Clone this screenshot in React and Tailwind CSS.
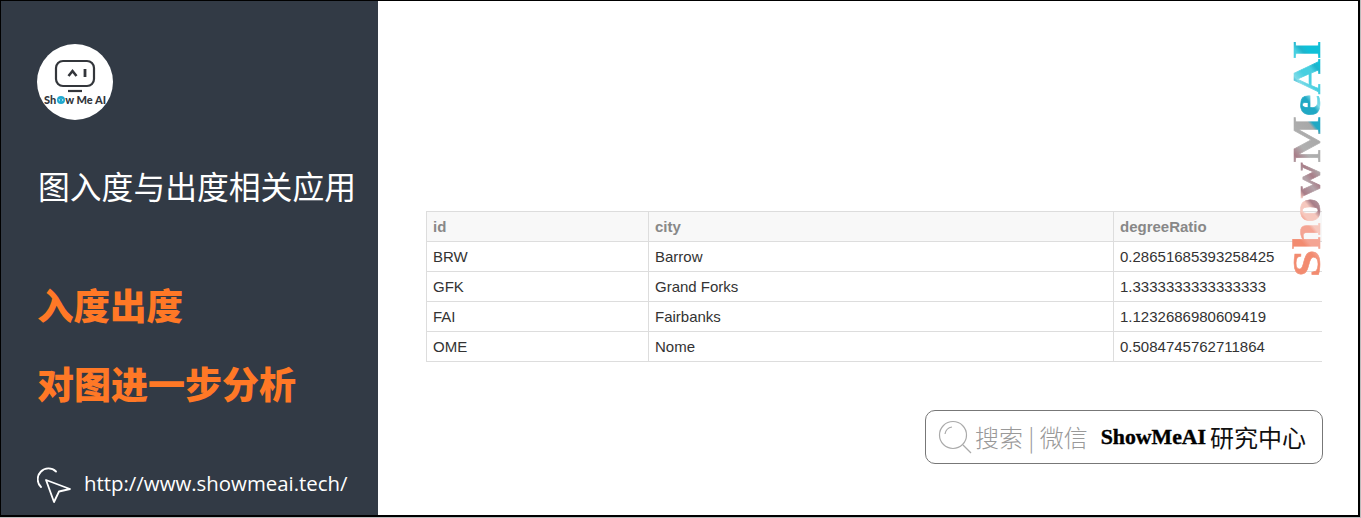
import React from 'react';

const rows = [
  ['BRW', 'Barrow', '0.28651685393258425'],
  ['GFK', 'Grand Forks', '1.3333333333333333'],
  ['FAI', 'Fairbanks', '1.1232686980609419'],
  ['OME', 'Nome', '0.5084745762711864'],
];

const cjk = { fontFamily: '"Noto Sans CJK SC", sans-serif' };

const Logo = () => (
  <div className="w-[76px] h-[76px] rounded-full bg-white flex flex-col items-center shrink-0">
    <svg width="42" height="36" viewBox="0 0 42 36" className="mt-[15px] shrink-0" fill="none" stroke="#33363b">
      <rect x="2" y="2" width="38" height="25" rx="7" strokeWidth="2.2" />
      <path d="M14.5 17 L18.5 12 L22.5 17" strokeWidth="2.6" />
      <path d="M31 10 V18" strokeWidth="2.8" />
      <path d="M14 32 H28" strokeWidth="2.2" />
    </svg>
    <div className="mt-[-1px] flex items-center text-[11px] leading-[12px] font-black text-[#33363b] whitespace-nowrap" style={{ fontFamily: 'Lato, sans-serif' }}>
      Sh
      <svg width="8" height="8" viewBox="0 0 8 8" className="mx-[0.5px]">
        <circle cx="4" cy="4" r="4" fill="#1fa8cf" />
        <path d="M3 2.8 L1.8 4 L3 5.2 M5 2.8 L6.2 4 L5 5.2" fill="none" stroke="#fff" strokeWidth="0.7" />
      </svg>
      w&nbsp;Me&nbsp;AI
    </div>
  </div>
);

const Cursor = () => (
  <svg width="36" height="36" viewBox="0 0 36 36" className="mt-[1px] mb-[-3px] shrink-0" fill="none" stroke="#fff" strokeWidth="1.8" strokeLinejoin="round" strokeLinecap="round">
    <path d="M4 20 A10.5 10.5 0 0 1 19 4.5" />
    <path d="M9 13 L33 22 L22 24.5 L17 35 Z" />
  </svg>
);

const Watermark = () => (
  <div
    className="absolute left-[1288px] top-[41px] h-[234px] flex items-center justify-center [writing-mode:vertical-rl] rotate-180 scale-x-[0.82] text-[49px] leading-[36px] font-bold whitespace-nowrap text-transparent bg-clip-text [-webkit-text-stroke:0.7px_transparent] bg-[linear-gradient(225deg,#f28b70_0%,#f28b70_17%,#f4a493_20%,#f4a493_26%,#f6c8be_28%,#f6c8be_33%,#a87d88_36%,#b3a3a9_42%,#a87d88_46%,#b0b0b0_52%,#a8a8a8_64%,#1fa8c4_66%,#1fa8c4_72%,#7fdbe8_75%,#47cfe0_80%,#47cfe0_85%,#1fb4cc_88%,#0fc0d8_91%,#0fc0d8_100%)]"
    style={{ fontFamily: '"Liberation Serif", serif' }}
  >
    ShowMeAI
  </div>
);

const SearchBox = () => (
  <div className="self-end mr-[35px] mt-[48px] w-[398px] h-[54px] rounded-[10px] border border-[#777] flex items-center pl-[12px]">
    <svg width="35" height="35" viewBox="0 0 35 35" fill="none" stroke="#aaa" strokeWidth="1.2" className="shrink-0">
      <circle cx="15" cy="15" r="13.5" />
      <path d="M7 14 A8.5 8.5 0 0 1 14 7" />
      <path d="M25 25 L33 33" />
    </svg>
    <span className="ml-[2px] text-[24px] text-[#999] font-light whitespace-nowrap" style={cjk}>搜索 | 微信</span>
    <span className="ml-[13px] text-[21.8px] font-bold text-black whitespace-nowrap [-webkit-text-stroke:0.4px_#000]" style={{ fontFamily: '"Liberation Serif", serif' }}>ShowMeAI</span>
    <span className="ml-[4px] text-[24px] text-[#111] whitespace-nowrap" style={cjk}>研究中心</span>
  </div>
);

export default function App() {
  return (
    <div className="w-[1361px] h-[518px] bg-[#bbb]">
      <div className="relative w-[1360px] h-[517px] bg-white border-t border-l border-r-2 border-b-2 border-black flex overflow-hidden">
        {/* Left panel */}
        <aside className="w-[377px] shrink-0 bg-[#323a45] pl-[36px] flex flex-col" style={cjk}>
          <div className="mt-[43px]"><Logo /></div>
          <h1 className="mt-[41px] ml-[1px] text-[31.8px] leading-[48px] text-white whitespace-nowrap">图入度与出度相关应用</h1>
          <p className="mt-[72px] text-[36.5px] leading-[48px] font-black text-[#ff7826] whitespace-nowrap">入度出度</p>
          <p className="mt-[30px] text-[37px] leading-[48px] font-black text-[#ff7826] whitespace-nowrap">对图进一步分析</p>
          <div className="mt-auto mb-[15px] flex items-center">
            <Cursor />
            <span className="ml-[11px] text-[20.4px] text-white whitespace-nowrap" style={{ fontFamily: '"Open Sans", sans-serif' }}>http://www.showmeai.tech/</span>
          </div>
        </aside>

        {/* Right panel */}
        <main className="flex-1 min-w-0 flex flex-col pt-[210px]">
          <div className="ml-[48px] mr-[36px] overflow-hidden" style={{ fontFamily: '"Liberation Sans", sans-serif' }}>
            <table className="w-[920px] table-fixed border-collapse text-[15px] text-[#333]">
              <thead>
                <tr className="h-[30px] bg-[#f8f8f8] text-[#888] font-bold">
                  <td className="w-[222px] border border-[#ddd] px-[6px] pt-[1px]">id</td>
                  <td className="w-[465px] border border-[#ddd] px-[6px] pt-[1px]">city</td>
                  <td className="border border-[#ddd] px-[6px] pt-[1px]">degreeRatio</td>
                </tr>
              </thead>
              <tbody>
                {rows.map(r => (
                  <tr key={r[0]} className="h-[30px]">
                    <td className="border border-[#ddd] px-[6px] pt-[1px]">{r[0]}</td>
                    <td className="border border-[#ddd] px-[6px] pt-[1px]">{r[1]}</td>
                    <td className="border border-[#ddd] px-[6px] pt-[1px]">{r[2]}</td>
                  </tr>
                ))}
              </tbody>
            </table>
          </div>
          <SearchBox />
        </main>

        <Watermark />
      </div>
    </div>
  );
}
